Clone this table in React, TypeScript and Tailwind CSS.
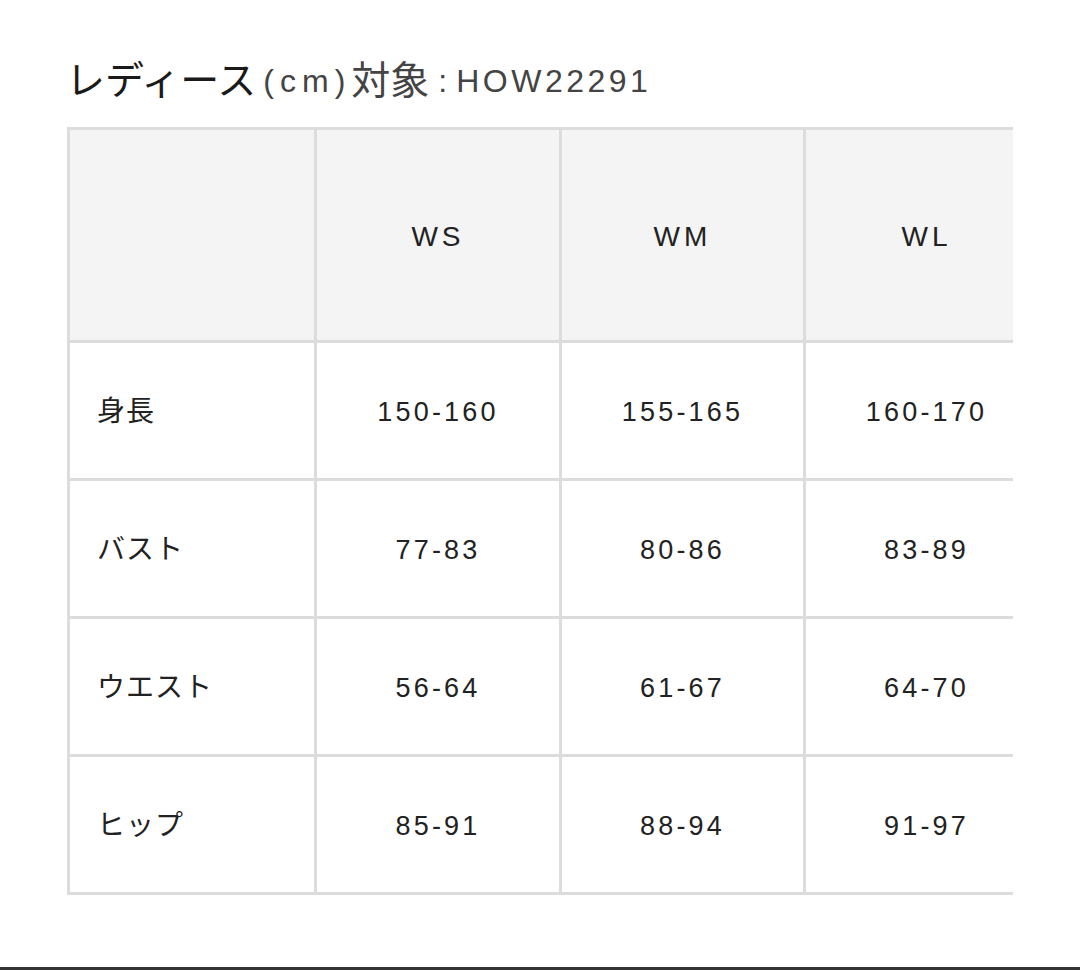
import React from "react";

const font = { fontFamily: '"Liberation Sans", "Noto Sans CJK JP", sans-serif' };

const sizes = ["WS", "WM", "WL"];

const rows = [
  { label: "身長", values: ["150-160", "155-165", "160-170"] },
  { label: "バスト", values: ["77-83", "80-86", "83-89"] },
  { label: "ウエスト", values: ["56-64", "61-67", "64-70"] },
  { label: "ヒップ", values: ["85-91", "88-94", "91-97"] },
];

// the last column runs past the clipped edge, as in the page
const colWidths = ["w-[247px]", "w-[245px]", "w-[244px]", "w-[244px]"];

const App = () => {
  return (
    <div className="h-[970px] bg-white flex flex-col text-[#222]" style={font}>
      {/* Title */}
      <div className="pt-[60px] pl-[66px] h-[102px] flex items-center">
        <h1 className="text-[39px] leading-[42px] font-normal whitespace-nowrap flex items-center">
          <span className="text-[#1a1a1a]">レディース</span>
          <span className="text-[#444] text-[32px] tracking-[6px] ml-[7px]">(cm)</span>
          <span className="text-[#444] text-[39px]">対象</span>
          <span className="text-[#444] text-[32px] mx-[9px]">:</span>
          <span className="text-[#444] text-[32px] tracking-[3.5px]">HOW22291</span>
        </h1>
      </div>

      {/* Size table */}
      <div className="mt-[25px] ml-[67px] w-[946px] overflow-hidden">
        <table className="table-fixed border-separate border-spacing-0 border-l-[3px] border-t-[3px] border-[#dcdcdc] w-[983px]">
          <colgroup>
            {colWidths.map((w, i) => (
              <col key={i} className={w} />
            ))}
          </colgroup>
          <thead>
            <tr className="bg-[#f4f4f4]">
              <th className="h-[213px] border-r-[3px] border-b-[3px] border-[#dcdcdc]" />
              {sizes.map((s) => (
                <th
                  key={s}
                  className="h-[213px] pt-[3px] border-r-[3px] border-b-[3px] border-[#dcdcdc] text-[28px] font-normal tracking-[4px] text-center"
                >
                  {s}
                </th>
              ))}
            </tr>
          </thead>
          <tbody>
            {rows.map((row) => (
              <tr key={row.label}>
                <td className="h-[138px] pt-[3px] border-r-[3px] border-b-[3px] border-[#dcdcdc] pl-[27px] text-[28px] tracking-[1px] text-left">
                  {row.label}
                </td>
                {row.values.map((v, i) => (
                  <td
                    key={i}
                    className="h-[138px] pt-[3px] border-r-[3px] border-b-[3px] border-[#dcdcdc] text-[27px] tracking-[3.2px] text-center"
                  >
                    {v}
                  </td>
                ))}
              </tr>
            ))}
          </tbody>
        </table>
      </div>

      <div className="flex-1" />
      <div className="h-[3px] bg-[#333]" />
    </div>
  );
};

export default App;
